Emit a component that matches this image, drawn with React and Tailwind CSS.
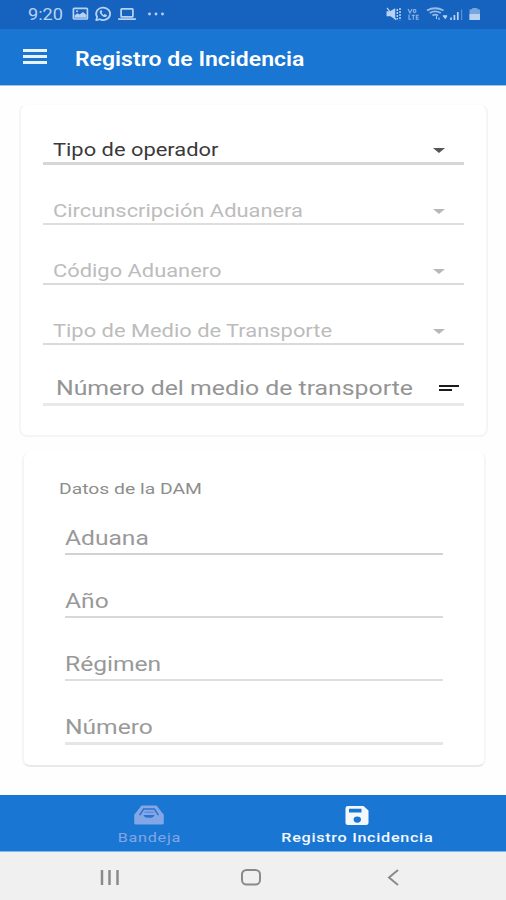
import React from "react";

const selects = [
  { label: "Tipo de operador", color: "text-[#3a3a3a]", arrow: "bg-[#555]", line: "border-b-[3px] border-[#d6d6d6]" },
  { label: "Circunscripción Aduanera", color: "text-[#bcbcbc]", arrow: "bg-[#b8b8b8]", line: "border-b-2 border-[#dedede]" },
  { label: "Código Aduanero", color: "text-[#bcbcbc]", arrow: "bg-[#b8b8b8]", line: "border-b-2 border-[#dadada]" },
  { label: "Tipo de Medio de Transporte", color: "text-[#bcbcbc]", arrow: "bg-[#b8b8b8]", line: "border-b-2 border-[#dadada]" },
];

const fields = [
  { label: "Aduana", box: "h-[49px]", line: "border-b-2 border-[#d2d2d2]" },
  { label: "Año", box: "h-[63px]", line: "border-b-2 border-[#d8d8d8]" },
  { label: "Régimen", box: "h-[63px]", line: "border-b-2 border-[#dedede]" },
  { label: "Número", box: "h-[64px]", line: "border-b-[3px] border-[#e6e6e6]" },
];

function StatusBar() {
  return (
    <div className="flex h-[29px] items-center bg-[#1563bf] pl-7 text-[#b9d2f3]">
      <span className="w-[44px] pt-px text-[16.5px] leading-none">
        <span className="inline-block origin-left scale-x-[1.1]">9:20</span>
      </span>
      <svg className="-mt-px" width="96" height="18" viewBox="0 0 96 18" fill="none">
        <rect x="1.4" y="3.4" width="14" height="10.6" rx="0.8" stroke="currentColor" strokeWidth="1.7" />
        <path d="M2.5 12.8V10.5L5.5 8.2L7.5 9.6L11 7L14.5 10V12.8Z" fill="currentColor" />
        <circle cx="5" cy="6.3" r="1" fill="currentColor" />
        <path d="M24.2 15.1L25.2 12.1A7 6.2 0 1 1 27.7 14.2Z" stroke="currentColor" strokeWidth="1.7" strokeLinejoin="round" />
        <path d="M28.3 5.4C27.2 6.5 27.8 8.6 29.8 10.4C31.8 12.2 33.9 12.4 34.7 11.2L34.9 10L32.7 9L31.7 9.9C30.6 9.4 29.9 8.7 29.6 7.8L30.3 7L29.7 5.2Z" fill="currentColor" />
        <rect x="49.1" y="3.8" width="11.8" height="8.1" rx="0.7" stroke="currentColor" strokeWidth="1.7" />
        <path d="M46 13.2H64V14.3Q64 15 63 15H47Q46 15 46 14.3Z" fill="currentColor" />
        <circle cx="77.5" cy="9" r="1.4" fill="currentColor" />
        <circle cx="84" cy="9" r="1.4" fill="currentColor" />
        <circle cx="90.5" cy="9" r="1.4" fill="currentColor" />
      </svg>
      <svg className="-mt-px ml-auto mr-6" width="96" height="18" viewBox="0 0 96 18" fill="none">
        <path d="M0.5 6.3H4L9.2 3.2V14.5L4.5 11.3H0.5Z" fill="currentColor" />
        <path d="M1 2.8L10 14.8" stroke="currentColor" strokeWidth="1.3" />
        <path d="M11.3 4V14.5M14 3V15.3" stroke="currentColor" strokeWidth="1.5" strokeDasharray="2 1" />
        <g opacity="0.75" stroke="currentColor" strokeWidth="1.1">
          <path d="M22 4L24 8L26 4M27.2 6A1.4 1.4 0 1 0 30 6A1.4 1.4 0 1 0 27.2 6" />
          <path d="M23 9.5V14.3H25.2M25.6 10.2H29M27.3 10.2V14.8M32.8 10.2H30.3V14.3H32.8M30.3 12.2H32.5" />
        </g>
        <path d="M41 5.5Q49 1 57.5 5.5M43.8 8Q49.3 4.8 54.8 8M46.5 10.5Q49.2 8.8 52 10.5" stroke="currentColor" strokeWidth="1.9" opacity="0.8" />
        <path d="M50.5 14V11.2M53 12.5V15M57 10.8L59.3 13.7L61 10.8Z" stroke="currentColor" strokeWidth="1" fill="currentColor" />
        <path d="M65 12.5V15M68.4 10V15M71.8 7V15" stroke="currentColor" strokeWidth="1.7" />
        <path d="M75.6 4.5V15" stroke="currentColor" strokeWidth="1.3" opacity="0.4" />
        <path d="M83.5 5.2Q83.5 4.3 84.5 4.3H86.3V3H91.3V4.3H93Q94 4.3 94 5.2V15H83.5Z" fill="currentColor" opacity="0.6" />
        <path d="M83.5 9H94V15H83.5Z" fill="currentColor" />
      </svg>
    </div>
  );
}

function SelectRow({ item }) {
  return (
    <div className={`flex h-[60px] items-end justify-between pl-[10px] pr-[19px] ${item.line}`}>
      <span className={`mb-[2px] inline-block origin-left scale-x-[1.25] whitespace-nowrap text-[17.5px] leading-[20px] ${item.color}`}>
        {item.label}
      </span>
      <span className={`mb-[9px] h-[5px] w-[12px] [clip-path:polygon(0_0,100%_0,50%_100%)] ${item.arrow}`} />
    </div>
  );
}

export default function App() {
  return (
    <div className="flex h-[900px] w-[506px] flex-col overflow-hidden bg-[#fefefe] font-[Roboto,sans-serif]">
      <StatusBar />
      <header className="flex h-[57px] items-center border-b border-[#9cc5ee] bg-[#1976d2] pl-[23px] text-white">
        <div className="mb-[2px] flex w-[52px] flex-col gap-[3px]">
          <span className="h-[3px] w-[24px] bg-[#e8f2fc]" />
          <span className="h-[3px] w-[24px] bg-[#e8f2fc]" />
          <span className="h-[3px] w-[24px] bg-[#e8f2fc]" />
        </div>
        <h1 className="mt-[5px] origin-left scale-x-[1.18] whitespace-nowrap text-[19.5px] font-semibold leading-none">Registro de Incidencia</h1>
      </header>

      <main className="flex h-[709px] flex-col pt-[18px]">
        <section className="ml-[19px] h-[333px] w-[469px] rounded-lg border-2 border-t border-[#f5f5f5] border-t-[#fcfcfc] bg-white pl-[22px] pr-[22px]">
          {selects.map((s) => (
            <SelectRow key={s.label} item={s} />
          ))}
          <div className="flex h-[61px] items-end justify-between border-b-[3px] border-[#e9e9e9] pl-[13px] pr-[5px]">
            <span className="mb-[3px] origin-left scale-x-[1.24] whitespace-nowrap text-[20px] leading-[24px] text-[#949494]">
              Número del medio de transporte
            </span>
            <span className="mb-3 flex flex-col gap-[2px]">
              <span className="h-[2px] w-5 bg-[#1c1c1c]" />
              <span className="h-[2px] w-[13px] bg-[#1c1c1c]" />
            </span>
          </div>
        </section>

        <section className="ml-[22px] mt-[15px] h-[315px] w-[464px] rounded-lg border-2 border-t-0 border-[#f5f5f5] border-b-[#e9e9e9] bg-white">
          <h2 className="ml-[35px] flex h-[54px] items-end">
            <span className="mb-[8px] origin-left scale-x-[1.245] whitespace-nowrap text-[15.5px] leading-[18px] text-[#8d8d8d]">
              Datos de la DAM
            </span>
          </h2>
          <div className="ml-[41px] w-[378px]">
            {fields.map((f) => (
              <div key={f.label} className={`flex items-end ${f.box} ${f.line}`}>
                <span className="mb-[3px] origin-left scale-x-[1.23] text-[20px] leading-[24px] text-[#999]">{f.label}</span>
              </div>
            ))}
          </div>
        </section>
      </main>

      <nav className="flex h-[57px] border-b border-[#86b8ea] bg-[#1976d2]">
        <div className="ml-[99px] flex w-[100px] flex-col items-center pt-[10px] text-[#82a6e6]">
          <svg width="32" height="21" viewBox="0 0 32 21">
            <path d="M8.5 0.5H23.5L30.8 9.8V18Q30.8 19.6 29 19.6H3Q1.2 19.6 1.2 18V9.8Z" fill="currentColor" />
            <path d="M6.6 10.2L10.6 4H21.4L25.4 10.2" fill="none" stroke="#2f72ce" strokeWidth="1.5" />
            <path d="M10.4 10H21.6Q20.4 12.8 18.4 12.8H13.6Q11.6 12.8 10.4 10Z" fill="#2a74d0" />
            <path d="M11.5 7.2H20.5" stroke="#4a83d6" strokeWidth="0.9" />
          </svg>
          <span className="mt-[3px] scale-x-[1.2] text-[13.5px] leading-[16px] tracking-[0.6px]">Bandeja</span>
        </div>
        <div className="ml-[58px] flex w-[200px] flex-col items-center pt-[10px] text-[#f2f8fe]">
          <svg width="24" height="21" viewBox="0 0 24 21">
            <path fillRule="evenodd" d="M3 1H18.5L23.5 5.4V18Q23.5 20 21 20H3Q0.5 20 0.5 18V3Q0.5 1 3 1ZM4 3.8V7.6H16.5V3.8ZM12.3 11.5A3.7 3.1 0 1 0 12.3 17.7A3.7 3.1 0 1 0 12.3 11.5Z" fill="currentColor" />
          </svg>
          <span className="mt-[3px] scale-x-[1.2] whitespace-nowrap text-[13.5px] font-medium leading-[16px] tracking-[0.57px]">Registro Incidencia</span>
        </div>
      </nav>

      <footer className="flex h-[48px] items-center bg-[#f0f0f0] pl-[100px] text-[#8a8a8a]">
        <svg width="301" height="20" viewBox="0 0 301 20" fill="none" stroke="currentColor" strokeWidth="2">
          <path d="M2 4V19M9.5 4V19M17.5 4V19" strokeWidth="2.5" />
          <rect x="142" y="4" width="18" height="14.5" rx="4.5" />
          <path d="M298 4L289 11.5L298 19" />
        </svg>
      </footer>
    </div>
  );
}
